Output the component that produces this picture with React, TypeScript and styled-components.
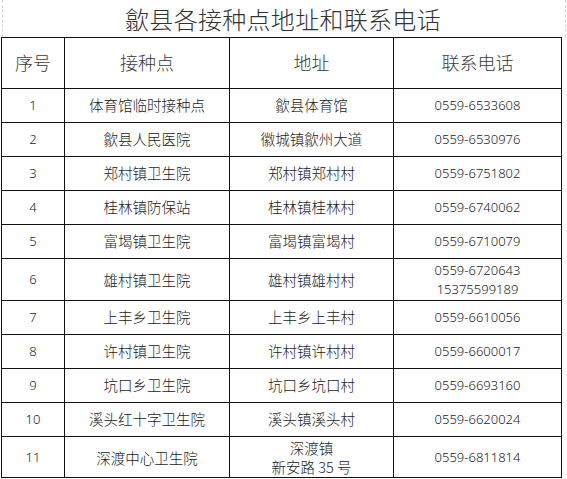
import React from 'react';
import styled, { createGlobalStyle } from 'styled-components';

const GlobalStyle = createGlobalStyle`
  html, body {
    margin: 0;
    padding: 0;
    background: #fff;
  }
  body {
    font-family: "Noto Sans CJK SC", "Noto Sans", sans-serif;
    color: #1a1a1a;
  }
`;

type Row = {
  no: string;
  site: string;
  address: string[];
  phone: string[];
  tall?: boolean;
};

const rows: Row[] = [
  { no: '1', site: '体育馆临时接种点', address: ['歙县体育馆'], phone: ['0559-6533608'] },
  { no: '2', site: '歙县人民医院', address: ['徽城镇歙州大道'], phone: ['0559-6530976'] },
  { no: '3', site: '郑村镇卫生院', address: ['郑村镇郑村村'], phone: ['0559-6751802'] },
  { no: '4', site: '桂林镇防保站', address: ['桂林镇桂林村'], phone: ['0559-6740062'] },
  { no: '5', site: '富堨镇卫生院', address: ['富堨镇富堨村'], phone: ['0559-6710079'] },
  { no: '6', site: '雄村镇卫生院', address: ['雄村镇雄村村'], phone: ['0559-6720643', '15375599189'], tall: true },
  { no: '7', site: '上丰乡卫生院', address: ['上丰乡上丰村'], phone: ['0559-6610056'] },
  { no: '8', site: '许村镇卫生院', address: ['许村镇许村村'], phone: ['0559-6600017'] },
  { no: '9', site: '坑口乡卫生院', address: ['坑口乡坑口村'], phone: ['0559-6693160'] },
  { no: '10', site: '溪头红十字卫生院', address: ['溪头镇溪头村'], phone: ['0559-6620024'] },
  { no: '11', site: '深渡中心卫生院', address: ['深渡镇', '新安路 35 号'], phone: ['0559-6811814'], tall: true },
];

const App: React.FC = () => (
  <Page>
    <GlobalStyle />
    <TitleBar>歙县各接种点地址和联系电话</TitleBar>
    <Table>
      <HeadCell>序号</HeadCell>
      <HeadCell>接种点</HeadCell>
      <HeadCell>地址</HeadCell>
      <HeadCell>联系电话</HeadCell>
      {rows.map((r) => (
        <React.Fragment key={r.no}>
          <Cell $tall={r.tall} $digits>{r.no}</Cell>
          <Cell $tall={r.tall}>{r.site}</Cell>
          <Cell $tall={r.tall}>
            {r.address.map((line) => (
              <Line key={line}>{line}</Line>
            ))}
          </Cell>
          <Cell $tall={r.tall} $digits>
            {r.phone.map((line) => (
              <Line key={line}>{line}</Line>
            ))}
          </Cell>
        </React.Fragment>
      ))}
    </Table>
  </Page>
);

const Page = styled.div`
  width: 567px;
  height: 479px;
  padding-left: 1px;
  box-sizing: border-box;
  overflow: hidden;
`;

const TitleBar = styled.div`
  width: 564px;
  height: 37px;
  margin-left: 1px;
  box-sizing: border-box;
  border-left: 1px dashed #d4d4d4;
  border-right: 1px dashed #d4d4d4;
  display: flex;
  align-items: center;
  justify-content: center;
  padding-right: 2px;
  font-size: 24px;
  font-weight: 300;
  letter-spacing: 0.3px;
  color: #333;
  line-height: 1;
`;

const Table = styled.div`
  display: grid;
  grid-template-columns: 63px 165px 164px 168px;
  grid-template-rows: 51px repeat(5, 34px) 42px repeat(4, 34px) 41px;
  border-left: 1px solid #111;
  border-top: 1px solid #111;
  width: fit-content;
`;

const HeadCell = styled.div`
  box-sizing: border-box;
  border-right: 1px solid #111;
  border-bottom: 1px solid #111;
  display: flex;
  align-items: center;
  justify-content: center;
  font-size: 18px;
  font-weight: 300;
  color: #3a3a3a;
  padding-bottom: 2px;
`;

const Cell = styled.div<{ $tall?: boolean; $digits?: boolean }>`
  box-sizing: border-box;
  border-right: 1px solid #111;
  border-bottom: 1px solid #111;
  display: flex;
  flex-direction: column;
  align-items: center;
  justify-content: center;
  font-size: ${(p) => (p.$digits ? '13px' : '14.5px')};
  font-weight: 300;
  font-family: ${(p) =>
    p.$digits
      ? '"Noto Sans", "DejaVu Sans", sans-serif'
      : '"Noto Sans CJK SC", "Noto Sans", sans-serif'};
  font-variant-numeric: tabular-nums;
  color: #222;
  line-height: ${(p) => (p.$tall ? '19px' : '1')};
`;

const Line = styled.span`
  display: block;
  white-space: nowrap;
  font-family: inherit;
`;

export default App;
